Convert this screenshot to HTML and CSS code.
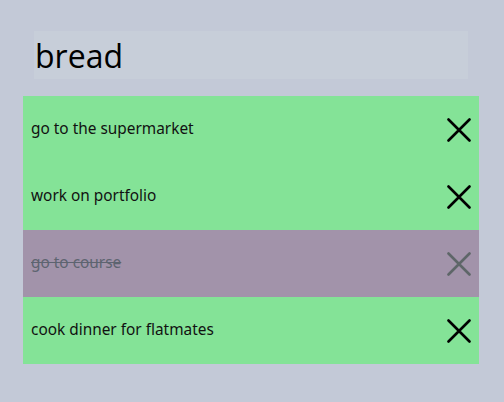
FILE: index.html
```html
<!DOCTYPE html>
<html>
<head>
<meta charset="utf-8">
<link rel="stylesheet" href="styles.css">
</head>
<body>
<div class="app">
  <div class="search"><input class="search-input" type="text" value="bread"></div>
  <ul class="list">
    <li class="item"><span class="label">go to the supermarket</span><button class="del" aria-label="delete"><svg viewBox="0 0 24 24" width="24" height="24"><path d="M1.5 1.5L22.5 22.5M22.5 1.5L1.5 22.5" /></svg></button></li>
    <li class="item"><span class="label">work on portfolio</span><button class="del" aria-label="delete"><svg viewBox="0 0 24 24" width="24" height="24"><path d="M1.5 1.5L22.5 22.5M22.5 1.5L1.5 22.5" /></svg></button></li>
    <li class="item done"><span class="label">go to course</span><button class="del" aria-label="delete"><svg viewBox="0 0 24 24" width="24" height="24"><path d="M1.5 1.5L22.5 22.5M22.5 1.5L1.5 22.5" /></svg></button></li>
    <li class="item"><span class="label">cook dinner for flatmates</span><button class="del" aria-label="delete"><svg viewBox="0 0 24 24" width="24" height="24"><path d="M1.5 1.5L22.5 22.5M22.5 1.5L1.5 22.5" /></svg></button></li>
  </ul>
</div>
</body>
</html>
```
FILE: styles.css
```css
html, body {
  margin: 0;
  padding: 0;
  background: #c3c9d7;
  height: 100%;
}
.app {
  padding: 31px 25px 0 23px;
  font-family: "Noto Sans", sans-serif;
}
.search {
  padding: 0 11px;
  margin-bottom: 17px;
}
.search-input {
  display: block;
  box-sizing: border-box;
  width: 434px;
  height: 48px;
  border: none;
  outline: none;
  background: #c7ced9;
  padding: 0 1px;
  font-family: "Open Sans", sans-serif;
  font-size: 32px;
  color: #000;
}
.list {
  list-style: none;
  margin: 0;
  padding: 0;
  width: 456px;
}
.item {
  display: flex;
  align-items: center;
  justify-content: space-between;
  height: 67px;
  padding: 0 8px;
  box-sizing: border-box;
  background: #84e397;
}
.label {
  font-size: 15.4px;
  color: #111;
  margin-bottom: 2px;
}
.del {
  background: none;
  border: none;
  padding: 0;
  width: 24px;
  height: 24px;
  display: block;
  cursor: pointer;
}
.del svg {
  display: block;
  fill: none;
  stroke: #000;
  stroke-width: 2.6;
  stroke-linecap: round;
}
.done {
  background: #a293aa;
}
.done .label {
  color: #5d6470;
  text-decoration: line-through;
}
.done .del svg {
  stroke: #5e6668;
}
```
